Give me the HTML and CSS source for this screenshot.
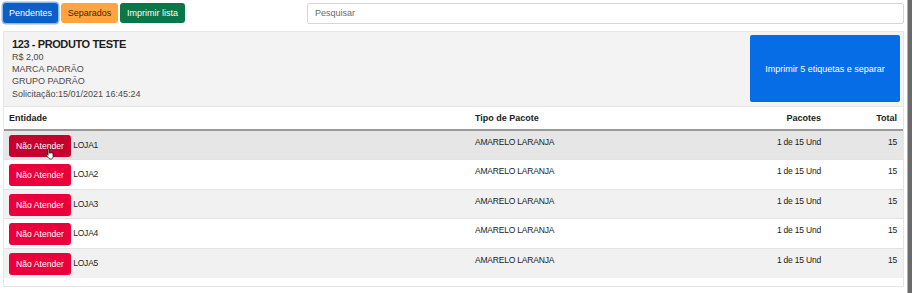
FILE: index.html
```html
<!DOCTYPE html>
<html lang="pt-BR">
<head>
<meta charset="utf-8">
<title>Separação</title>
<link rel="stylesheet" href="styles.css">
</head>
<body>
<div class="screen">
  <div class="page">
    <div class="toolbar">
      <button class="btn btn-blue active">Pendentes</button>
      <button class="btn btn-orange">Separados</button>
      <button class="btn btn-green">Imprimir lista</button>
      <input class="search" type="text" placeholder="Pesquisar">
    </div>
    <div class="panel">
      <div class="card">
        <div class="info">
          <div class="title">123 - PRODUTO TESTE</div>
          <div class="line">R$ 2,00</div>
          <div class="line">MARCA PADRÃO</div>
          <div class="line">GRUPO PADRÃO</div>
          <div class="line">Solicitação:15/01/2021 16:45:24</div>
        </div>
        <button class="print">Imprimir 5 etiquetas e separar</button>
      </div>
      <table class="grid">
        <thead>
          <tr>
            <th class="c-ent">Entidade</th>
            <th class="c-tipo">Tipo de Pacote</th>
            <th class="c-pac">Pacotes</th>
            <th class="c-tot">Total</th>
          </tr>
        </thead>
        <tbody>
          <tr class="hover">
            <td class="c-ent"><span class="cursor-wrap"><button class="btn-red">Não Atender</button><svg class="cursor" width="11" height="12" viewBox="0 0 11 12"><path d="M3 1.2c0-.7 1.2-.7 1.2 0v4l.3-.1c.2-.6 1.2-.5 1.2.1l.2-.1c.3-.5 1.1-.4 1.1.2 .3-.4 1.1-.3 1.1.3v3c0 1.3-.9 2.4-2.2 2.4H5.2c-.8 0-1.4-.5-1.9-1.2L1.3 7.3c-.4-.6.4-1.3 1-.7l.7.8z" fill="#fff" stroke="#111" stroke-width=".8"/></svg></span> LOJA1</td>
            <td class="c-tipo">AMARELO LARANJA</td>
            <td class="c-pac">1 de 15 Und</td>
            <td class="c-tot">15</td>
          </tr>
          <tr>
            <td class="c-ent"><button class="btn-red">Não Atender</button> LOJA2</td>
            <td class="c-tipo">AMARELO LARANJA</td>
            <td class="c-pac">1 de 15 Und</td>
            <td class="c-tot">15</td>
          </tr>
          <tr class="odd">
            <td class="c-ent"><button class="btn-red">Não Atender</button> LOJA3</td>
            <td class="c-tipo">AMARELO LARANJA</td>
            <td class="c-pac">1 de 15 Und</td>
            <td class="c-tot">15</td>
          </tr>
          <tr>
            <td class="c-ent"><button class="btn-red">Não Atender</button> LOJA4</td>
            <td class="c-tipo">AMARELO LARANJA</td>
            <td class="c-pac">1 de 15 Und</td>
            <td class="c-tot">15</td>
          </tr>
          <tr class="odd">
            <td class="c-ent"><button class="btn-red">Não Atender</button> LOJA5</td>
            <td class="c-tipo">AMARELO LARANJA</td>
            <td class="c-pac">1 de 15 Und</td>
            <td class="c-tot">15</td>
          </tr>
        </tbody>
      </table>
    </div>
  </div>
  <div class="edge"></div>
</div>
</body>
</html>
```

FILE: styles.css
```css
* { box-sizing: border-box; }
html, body {
  margin: 0;
  padding: 0;
  background: #fff;
  font-family: "Liberation Sans", Arial, sans-serif;
  color: #222;
}
.screen {
  display: flex;
  width: 912px;
  height: 293px;
  overflow: hidden;
}
.page {
  flex: 1;
  padding: 3px 3px 0 3px;
}
.edge {
  width: 5px;
  background: #6a6a6a;
  border-left: 1px solid #b0b0b0;
}
.toolbar {
  display: flex;
  align-items: center;
  gap: 2px;
  height: 20px;
}
.btn {
  height: 20px;
  border: none;
  border-radius: 3px;
  padding: 0;
  white-space: nowrap;
  font-family: inherit;
  font-size: 9px;
  line-height: 20px;
}
.btn-blue {
  width: 55px;
  background: #0a60c6;
  color: #fff;
}
.btn-blue.active {
  box-shadow: 0 0 0 1.5px #8fb9ea;
  margin-right: 1px;
}
.btn-orange {
  width: 57px;
  background: #ffa540;
  color: #3b2410;
}
.btn-green {
  width: 65px;
  background: #0b7647;
  color: #fff;
}
.search {
  margin-left: auto;
  width: 597px;
  height: 21px;
  border: 1px solid #d6d6d6;
  border-radius: 2px;
  padding: 0 7px;
  font-family: inherit;
  font-size: 9px;
  color: #333;
  background: #fff;
}
.search::placeholder { color: #6a6a6a; }
.panel {
  margin-top: 8px;
  border: 1px solid #e6e6e6;
  padding-bottom: 8px;
}
.card {
  display: flex;
  justify-content: space-between;
  background: #f3f3f3;
  border-bottom: 1px solid #e4e4e4;
  height: 75px;
  padding: 3px 3px 3px 8px;
}
.info { padding-top: 2px; }
.title {
  font-size: 11px;
  font-weight: bold;
  letter-spacing: -0.4px;
  color: #1e1e1e;
  line-height: 14px;
}
.line {
  font-size: 9px;
  line-height: 12.2px;
  color: #4a4a4a;
}
.print {
  width: 150px;
  height: 67px;
  border: none;
  border-radius: 2px;
  background: #066de6;
  color: #fff;
  font-family: inherit;
  font-size: 9px;
}
.grid {
  width: 100%;
  border-collapse: collapse;
  font-size: 8.5px;
  letter-spacing: -0.2px;
}
.grid th {
  height: 23px;
  font-size: 9px;
  letter-spacing: 0;
  font-weight: bold;
  text-align: left;
  padding: 0 5px;
  border-bottom: 2px solid #9a9a9a;
  color: #222;
}
.grid td {
  height: 29.6px;
  padding: 4px 5px 0 5px;
  vertical-align: top;
  border-top: 1px solid #e2e2e2;
}
.grid td.c-tipo, .grid td.c-pac, .grid td.c-tot { padding-top: 6px; }
.grid tr.hover td { background: #e6e6e6; border-top: none; }
.grid tr.odd td { background: #f1f1f1; }
.c-ent { width: 466px; }
.c-tipo { width: 230px; }
.c-pac { text-align: right !important; padding-right: 6px !important; }
.c-tot { width: 76px; text-align: right !important; padding-right: 6px !important; }
.btn-red {
  width: 62px;
  height: 22px;
  border: none;
  border-radius: 3px;
  background: #ea003b;
  color: #fff;
  font-family: inherit;
  font-size: 8.6px;
  padding: 0;
  vertical-align: middle;
}
.hover .btn-red { background: #c5002f; }
.cursor-wrap {
  position: relative;
  display: inline-block;
  vertical-align: middle;
}
.cursor {
  position: absolute;
  left: 36px;
  top: 13px;
}
```
